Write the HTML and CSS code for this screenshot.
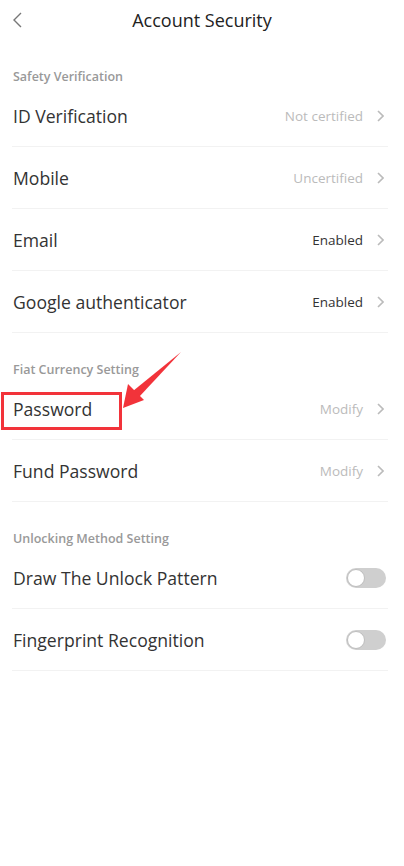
FILE: index.html
```html
<!DOCTYPE html>
<html>
<head>
    <title>Account Security</title>
    <link rel="stylesheet" href="styles.css">
</head>
<body>
    <div class="page">
        <div class="top-bar">
            <svg class="back" width="12" height="16" viewBox="0 0 12 16">
                <path d="M9 1 L2 8 L9 15" fill="none" stroke="#777" stroke-width="1.4"/>
            </svg>
            <h1>Account Security</h1>
            <span></span>
        </div>

        <div class="section-title">Safety Verification</div>
        <div class="row">
            <span class="label">ID Verification</span>
            <span class="value muted">Not certified</span>
            <svg class="chev" width="8" height="12" viewBox="0 0 8 12"><path d="M2 1 L7 6 L2 11" fill="none" stroke="#bbb" stroke-width="1.6"/></svg>
        </div>
        <div class="row">
            <span class="label">Mobile</span>
            <span class="value muted">Uncertified</span>
            <svg class="chev" width="8" height="12" viewBox="0 0 8 12"><path d="M2 1 L7 6 L2 11" fill="none" stroke="#bbb" stroke-width="1.6"/></svg>
        </div>
        <div class="row">
            <span class="label">Email</span>
            <span class="value">Enabled</span>
            <svg class="chev" width="8" height="12" viewBox="0 0 8 12"><path d="M2 1 L7 6 L2 11" fill="none" stroke="#bbb" stroke-width="1.6"/></svg>
        </div>
        <div class="row">
            <span class="label">Google authenticator</span>
            <span class="value">Enabled</span>
            <svg class="chev" width="8" height="12" viewBox="0 0 8 12"><path d="M2 1 L7 6 L2 11" fill="none" stroke="#bbb" stroke-width="1.6"/></svg>
        </div>

        <div class="section-title">Fiat Currency Setting</div>
        <div class="row">
            <span class="label">Password</span>
            <span class="value muted">Modify</span>
            <svg class="chev" width="8" height="12" viewBox="0 0 8 12"><path d="M2 1 L7 6 L2 11" fill="none" stroke="#bbb" stroke-width="1.6"/></svg>
        </div>
        <div class="row">
            <span class="label">Fund Password</span>
            <span class="value muted">Modify</span>
            <svg class="chev" width="8" height="12" viewBox="0 0 8 12"><path d="M2 1 L7 6 L2 11" fill="none" stroke="#bbb" stroke-width="1.6"/></svg>
        </div>

        <div class="section-title">Unlocking Method Setting</div>
        <div class="row">
            <span class="label">Draw The Unlock Pattern</span>
            <span class="switch"><span class="knob"></span></span>
        </div>
        <div class="row">
            <span class="label">Fingerprint Recognition</span>
            <span class="switch"><span class="knob"></span></span>
        </div>

        <!-- annotation over the page -->
        <div class="mark-box"></div>
        <svg class="mark-arrow" width="70" height="70" viewBox="0 0 70 70">
            <polygon points="61,0 13,39 19,45" fill="#f2333a"/>
            <polygon points="3,56 8,32 24,48" fill="#f2333a"/>
        </svg>
    </div>
</body>
</html>
```

FILE: styles.css
```css
body {
    margin: 0;
    background: #fff;
    font-family: 'Open Sans', sans-serif;
    color: #333;
}

.page {
    position: relative;
    width: 404px;
    min-height: 866px;
}

.top-bar {
    display: grid;
    grid-template-columns: 40px 1fr 40px;
    align-items: center;
    height: 40px;
}

.top-bar .back {
    margin-left: 12px;
}

.top-bar h1 {
    margin: 0;
    text-align: center;
    font-size: 18px;
    font-weight: 400;
    color: #222;
}

.section-title {
    padding: 28px 13px 0;
    height: 17px;
    line-height: 17px;
    font-size: 12.5px;
    font-weight: 600;
    color: #999;
}

.row {
    display: flex;
    align-items: center;
    height: 61px;
    margin: 0 16px 0 12px;
    border-bottom: 1px solid #f2f2f2;
}

.row .label {
    flex: 1;
    font-size: 17.6px;
    color: #333;
    padding-left: 1px;
}

.row .value {
    font-size: 13.5px;
    color: #333;
    margin-right: 13px;
}

.row .value.muted {
    color: #bbb;
}

.row .chev {
    margin-right: 4px;
}

.switch {
    position: relative;
    width: 40px;
    height: 20px;
    margin-right: 2px;
    border-radius: 10px;
    background: #cfcfcf;
}

.knob {
    position: absolute;
    left: 1px;
    top: 1px;
    width: 16px;
    height: 16px;
    border-radius: 50%;
    background: #fff;
    border: 1px solid #bdbdbd;
}

.mark-box {
    position: absolute;
    left: 1px;
    top: 392px;
    width: 115px;
    height: 32px;
    border: 3px solid #f2333a;
}

.mark-arrow {
    position: absolute;
    left: 120px;
    top: 352px;
}
```
